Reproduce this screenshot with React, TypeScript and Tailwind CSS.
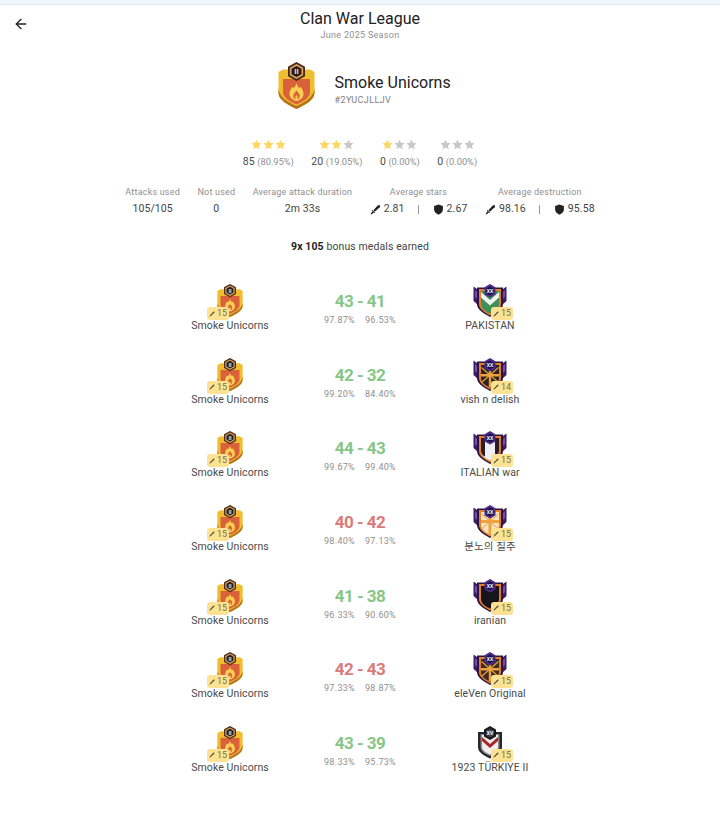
import { ArrowLeft } from "lucide-react";

const FONT = "font-['Roboto','Noto_Sans_CJK_KR',sans-serif]";

type Fill = "pakistan" | "sun" | "italy" | "cross" | "dark" | "sun2";

const WARS: {
  level: string;
  opp: string;
  oppAttacks: number;
  score: [number, number];
  pct: [string, string];
  win: boolean;
  fill: Fill | "turkey";
}[] = [
  { level: "XX", opp: "PAKISTAN", oppAttacks: 15, score: [43, 41], pct: ["97.87%", "96.53%"], win: true, fill: "pakistan" },
  { level: "XX", opp: "vish n delish", oppAttacks: 14, score: [42, 32], pct: ["99.20%", "84.40%"], win: true, fill: "sun" },
  { level: "XX", opp: "ITALIAN war", oppAttacks: 15, score: [44, 43], pct: ["99.67%", "99.40%"], win: true, fill: "italy" },
  { level: "XX", opp: "분노의 질주", oppAttacks: 15, score: [40, 42], pct: ["98.40%", "97.13%"], win: false, fill: "cross" },
  { level: "XX", opp: "iranian", oppAttacks: 15, score: [41, 38], pct: ["96.33%", "90.60%"], win: true, fill: "dark" },
  { level: "XX", opp: "eleVen Original", oppAttacks: 15, score: [42, 43], pct: ["97.33%", "98.87%"], win: false, fill: "sun2" },
  { level: "XV", opp: "1923 TÜRKİYE II", oppAttacks: 15, score: [43, 39], pct: ["98.33%", "95.73%"], win: true, fill: "turkey" },
];

function Sword({ className = "w-3 h-3" }: { className?: string }) {
  return (
    <svg viewBox="0 0 12 12" className={className} fill="currentColor" aria-hidden>
      <path d="M11 1 L10.6 3.6 L5.2 8.4 L3.7 6.9 L8.4 1.5 Z" />
      <path d="M2.6 6.6 L5.5 9.5 L4.8 10 L4 9.3 L2 11.2 L1 11.2 L0.9 10.2 L2.8 8.1 L2.1 7.3 Z" />
    </svg>
  );
}

function ShieldIcon({ className = "w-3 h-3" }: { className?: string }) {
  return (
    <svg viewBox="0 0 12 12" className={className} fill="currentColor" aria-hidden>
      <path d="M6 .6 L10.8 2.2 V6.4 C10.8 9 8.4 10.6 6 11.6 C3.6 10.6 1.2 9 1.2 6.4 V2.2 Z" />
    </svg>
  );
}

function Star({ on }: { on: boolean }) {
  return (
    <svg viewBox="0 0 24 24" className={`w-[11px] h-[11px] ${on ? "text-[#fdd663]" : "text-[#c8c8c8]"}`} fill="currentColor" aria-hidden>
      <path d="M12 1.5 L15.3 8.4 L23 9.4 L17.3 14.6 L18.9 22.2 L12 18.4 L5.1 22.2 L6.7 14.6 L1 9.4 L8.7 8.4 Z" />
    </svg>
  );
}

function FlameBadge({ className, level }: { className: string; level: string }) {
  return (
    <svg viewBox="0 0 37 47" className={className} aria-hidden>
      <path d="M0.5 10 L5 7.5 H32 L36.5 10 V31 C36.5 38 27 43 18.5 47 C10 43 0.5 38 0.5 31 Z" fill="#f0bd30" />
      <path d="M0.5 26 V31 C0.5 38 10 43 18.5 47 C27 43 36.5 38 36.5 31 V26 C36 35 27 40 18.5 44 C10 40 1 35 0.5 26Z" fill="#b5731d" />
      <path d="M5 17 H32 V30 C32 36 25 39.5 18.5 42.5 C12 39.5 5 36 5 30 Z" fill="#d9623a" />
      <path d="M18.5 21 C19.5 24 20.5 25.5 21.5 26 C22 25.5 22.3 25 22.5 24.5 C24 27 25.5 29 25.5 32 C25.5 36 22 38.5 18.5 39 C15 38.5 11.5 36 11.5 32 C11.5 29 13 27 14.5 24.5 C14.7 25 15 25.5 15.5 26 C16.5 25.5 17.5 24 18.5 21Z" fill="#f9d052" />
      <path d="M18.5 28 C19 30 20.5 30.5 21.5 32.5 C22.2 34.5 21 37 19.5 37.2 C20 35.5 19.5 34 18.5 33 C17.5 34 17 35.5 17.5 37.2 C16 37 14.8 34.5 15.5 32.5 C16.5 30.5 18 30 18.5 28Z" fill="#d9623a" />
      <path d="M18.5 0 L27 4.7 V14.3 L18.5 19 L10 14.3 V4.7 Z" fill="#4a2a12" />
      <path d="M18.5 2 L25.2 5.7 V13.3 L18.5 17 L11.8 13.3 V5.7 Z" fill="#d2a06a" />
      <path d="M18.5 4 L23.4 6.8 V12.2 L18.5 15 L13.6 12.2 V6.8 Z" fill="#2b1a10" />
      <text x="18.5" y="12.4" textAnchor="middle" fontSize="7.5" fontWeight="700" fill="#f4e6d0" fontFamily="Roboto, sans-serif">
        {level}
      </text>
    </svg>
  );
}

const INNER = "M8 7 H26 V20 C26 25 21 27.5 17 29.5 C13 27.5 8 25 8 20Z";

function InnerFill({ fill }: { fill: Fill }) {
  if (fill === "pakistan") {
    return (
      <>
        <path d={INNER} fill="#3f8f5a" />
        <path d="M8 8 L17 16 L26 8 V13.5 L17 21.5 L8 13.5 Z" fill="#f1f3ee" />
      </>
    );
  }
  if (fill === "italy") {
    return (
      <>
        <path d={INNER} fill="#efeef4" />
        <path d="M8 7 H12 V25.5 C10 24.5 8 23 8 20Z" fill="#2a1c22" />
        <path d="M26 7 H22 V25.5 C24 24.5 26 23 26 20Z" fill="#2a1c22" />
      </>
    );
  }
  if (fill === "cross") {
    return (
      <>
        <path d={INNER} fill="#f3e3be" />
        <path d="M8.5 9 L25.5 24 M25.5 9 L8.5 24" stroke="#eda23f" strokeWidth="1" />
        <path d="M15.5 8 H18.5 V29 H15.5Z M8 15 H26 V18 H8Z" fill="#eda23f" />
      </>
    );
  }
  if (fill === "dark") {
    return <path d={INNER} fill="#17151b" />;
  }
  return (
    <>
      <path d={INNER} fill={fill === "sun" ? "#2b2320" : "#3b2d24"} />
      <path d="M8.5 9.5 L25.5 24.5 M25.5 9.5 L8.5 24.5" stroke="#eba33d" strokeWidth="1.1" />
      <path d="M15.8 8 H18.2 V29 H15.8Z M8 16 H26 V18.4 H8Z" fill="#eba33d" />
    </>
  );
}

function PurpleBadge({ level, fill }: { level: string; fill: Fill }) {
  return (
    <svg viewBox="0 0 34 33" className="w-[34px] h-[33px]" aria-hidden>
      <path d="M0.5 2.5 L4 5 H30 L33.5 2.5 V17 L29 21 V8 H5 V21 L0.5 17 Z" fill="#3a1d66" />
      <path d="M2 6 L4 8 V15 L2 13Z M32 6 L30 8 V15 L32 13Z" fill="#7a4bb0" />
      <path d="M4 3.5 H30 V20 C30 26 22 30 17 33 C12 30 4 26 4 20 Z" fill="#2c1640" />
      <path d="M6 5 H28 V20 C28 25.4 21.5 29 17 31.4 C12.5 29 6 25.4 6 20 Z" fill="#e07f2e" />
      <InnerFill fill={fill} />
      <path d="M17 0 L22.5 3.2 V10.4 L17 13.6 L11.5 10.4 V3.2 Z" fill="#4a2a8a" />
      <path d="M17 2.4 L20.6 4.4 V9.2 L17 11.2 L13.4 9.2 V4.4 Z" fill="#1e0f3c" />
      <text x="17" y="8.8" textAnchor="middle" fontSize="5" fontWeight="700" fill="#fff" fontFamily="Roboto, sans-serif">
        {level}
      </text>
    </svg>
  );
}

function TurkeyBadge({ level }: { level: string }) {
  return (
    <svg viewBox="0 0 26 33" className="w-[26px] h-[33px]" aria-hidden>
      <path d="M1 6 H25 V21 C25 27 18 30 13 32.5 C8 30 1 27 1 21 Z" fill="#26262a" />
      <path d="M3.5 8 H22.5 V21 C22.5 25.4 17.5 28 13 30 C8.5 28 3.5 25.4 3.5 21 Z" fill="#8a8a8e" />
      <path d="M5 9 H21 V20.5 C21 24.5 17 26.8 13 28.5 C9 26.8 5 24.5 5 20.5 Z" fill="#f2eeee" />
      <path d="M5 11 L13 18 L21 11 V15 L13 22 L5 15 Z" fill="#a5262b" />
      <path d="M13 0 L19 3.4 V10.6 L13 14 L7 10.6 V3.4 Z" fill="#19191c" />
      <path d="M13 2.4 L17 4.6 V9.4 L13 11.6 L9 9.4 V4.6 Z" fill="#3e3e42" />
      <text x="13" y="9" textAnchor="middle" fontSize="5" fontWeight="700" fill="#fff" fontFamily="Roboto, sans-serif">
        {level}
      </text>
    </svg>
  );
}

function AttackChip({ count, className }: { count: number; className: string }) {
  return (
    <div className={`absolute flex items-center justify-center gap-[2px] w-[22px] h-[13px] rounded-[3px] bg-[#fde293] text-[#7d7238] text-[9px] leading-none ${className}`}>
      <Sword className="w-[6px] h-[6px] text-[#55503a]" />
      <span>{count}</span>
    </div>
  );
}

function ClanCell({ badge, name, chip }: { badge: React.ReactNode; name: string; chip: React.ReactNode }) {
  return (
    <div className="w-[130px] flex flex-col items-center">
      <div className="relative h-[33px] flex items-center justify-center">
        {badge}
        {chip}
      </div>
      <div className="mt-[2px] text-[10.5px] leading-[14px] tracking-[0.1px] text-[#4a4a4a] whitespace-nowrap">{name}</div>
    </div>
  );
}

function StarStat({ on, value, pct }: { on: number; value: number; pct: string }) {
  return (
    <div className="flex flex-col items-center gap-[5px]">
      <div className="flex gap-[1px]">
        {[0, 1, 2].map((i) => (
          <Star key={i} on={i < on} />
        ))}
      </div>
      <div className="text-[10.5px] leading-[14px] text-[#4a4a4a]">
        {value} <span className="text-[#8f8f8f] text-[9.3px]">({pct})</span>
      </div>
    </div>
  );
}

function InfoStat({ label, children }: { label: string; children: React.ReactNode }) {
  return (
    <div className="flex flex-col items-center gap-[4px]">
      <div className="text-[9px] leading-[12px] tracking-[0.2px] text-[#8f8f8f] whitespace-nowrap">{label}</div>
      <div className="flex items-center text-[10.5px] leading-[14px] tracking-[0.1px] text-[#444] whitespace-nowrap">{children}</div>
    </div>
  );
}

function SplitValue({ a, b }: { a: string; b: string }) {
  return (
    <>
      <Sword className="w-[11px] h-[11px] text-[#222] mr-[3px]" />
      {a}
      <div className="mx-[13.5px] w-px h-[9px] bg-[#999]" />
      <ShieldIcon className="w-[11px] h-[11px] text-[#222] mr-[3px]" />
      {b}
    </>
  );
}

export default function App() {
  return (
    <div className={`w-[720px] h-[823px] bg-white ${FONT}`}>
      <div className="h-[5px] bg-[#eef6fb] border-b border-[#dfe7ea]" />

      {/* Header */}
      <header className="grid grid-cols-[1fr_auto_1fr] items-start pt-[5px]">
        <div className="pl-[13px] pt-[6px]">
          <ArrowLeft className="w-[16px] h-[16px] text-[#222]" strokeWidth={2} />
        </div>
        <div className="flex flex-col items-center">
          <div className="text-[16px] leading-[18px] text-[#222]">Clan War League</div>
          <div className="mt-[1px] text-[9px] leading-[12px] tracking-[0.3px] text-[#8f8f8f]">June 2025 Season</div>
        </div>
        <div />
      </header>

      {/* Clan */}
      <section className="mt-[21px] flex justify-center items-center gap-[20px] pl-[10px]">
        <FlameBadge className="w-[37px] h-[47px]" level="II" />
        <div className="flex flex-col w-[118px] pt-[8px]">
          <div className="text-[16px] leading-[18px] text-[#222] whitespace-nowrap">Smoke Unicorns</div>
          <div className="mt-[2px] text-[9px] leading-[12px] tracking-[0.4px] text-[#808080]">#2YUCJLLJV</div>
        </div>
      </section>

      {/* Star split */}
      <section className="mt-[30px] flex justify-center gap-[17.5px]">
        <StarStat on={3} value={85} pct="80.95%" />
        <StarStat on={2} value={20} pct="19.05%" />
        <StarStat on={1} value={0} pct="0.00%" />
        <StarStat on={0} value={0} pct="0.00%" />
      </section>

      {/* Attack stats */}
      <section className="mt-[17px] flex justify-center gap-[17.5px]">
        <InfoStat label="Attacks used">105/105</InfoStat>
        <InfoStat label="Not used">0</InfoStat>
        <InfoStat label="Average attack duration">2m 33s</InfoStat>
        <InfoStat label="Average stars">
          <SplitValue a="2.81" b="2.67" />
        </InfoStat>
        <InfoStat label="Average destruction">
          <SplitValue a="98.16" b="95.58" />
        </InfoStat>
      </section>

      <div className="mt-[24px] text-center text-[10.5px] leading-[14px] tracking-[0.1px] text-[#444]">
        <span className="font-bold text-[#222]">9x 105</span> bonus medals earned
      </div>

      {/* Wars */}
      <section className="mt-[30px] flex flex-col gap-[24.67px]">
        {WARS.map((w, i) => (
          <div key={i} className="flex justify-center items-start">
            <ClanCell
              name="Smoke Unicorns"
              badge={<FlameBadge className="w-[26px] h-[33px]" level="II" />}
              chip={<AttackChip count={15} className="left-[-10px] bottom-[-3px]" />}
            />
            <div className="w-[130px] flex flex-col items-center pt-[7px]">
              <div className={`text-[17px] leading-[20px] font-bold tracking-[-0.5px] ${w.win ? "text-[#87c687]" : "text-[#d97b7b]"}`}>
                {w.score[0]} - {w.score[1]}
              </div>
              <div className="mt-[3px] flex gap-[10px] text-[9px] leading-[12px] tracking-[0.3px] text-[#8f8f8f]">
                <span>{w.pct[0]}</span>
                <span>{w.pct[1]}</span>
              </div>
            </div>
            <ClanCell
              name={w.opp}
              badge={w.fill === "turkey" ? <TurkeyBadge level={w.level} /> : <PurpleBadge level={w.level} fill={w.fill} />}
              chip={<AttackChip count={w.oppAttacks} className={w.fill === "turkey" ? "right-[-10px] bottom-[-3px]" : "right-[-6px] bottom-[-3px]"} />}
            />
          </div>
        ))}
      </section>
    </div>
  );
}
